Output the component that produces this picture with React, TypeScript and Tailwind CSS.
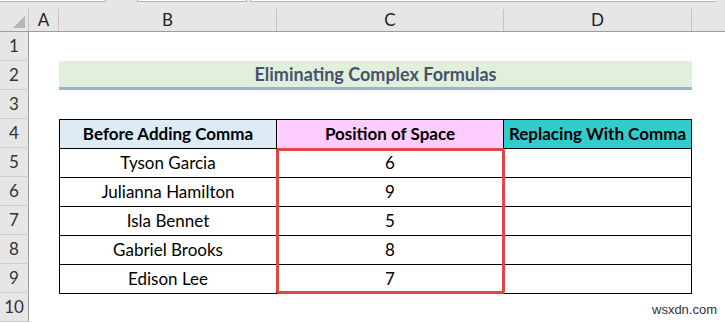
import React from "react";

const names = ["Tyson Garcia", "Julianna Hamilton", "Isla Bennet", "Gabriel Brooks", "Edison Lee"];
const nums = ["6", "9", "5", "8", "7"];

function RowHead({ n }: { n: number }) {
  return (
    <div className="w-[29px] h-[29px] shrink-0 bg-[#e6e6e6] border-r border-r-[#9e9e9e] border-b border-b-[#cfcfcf] flex items-center justify-center text-[17px] text-[#333] box-border">
      {n}
    </div>
  );
}

export default function App() {
  const font = { fontFamily: "Lato, 'Open Sans', sans-serif" };
  return (
    <div className="w-[725px] h-[323px] bg-white overflow-hidden relative" style={font}>
      {/* top strip */}
      <div className="h-[3px] bg-[#e6e6e6] flex">
        <div className="w-[106px] h-[2px] bg-white border-b border-r border-[#b5b5b5]" />
        <div className="w-[31px]" />
        <div className="w-[110px] h-[2px] bg-white border-b border-x border-[#b5b5b5]" />
        <div className="w-[3px]" />
        <div className="w-[466px] h-[2px] bg-white border-b border-l border-[#b5b5b5]" />
      </div>
      {/* column header */}
      <div className="h-[29px] bg-[#e6e6e6] border-b border-[#9e9e9e] flex items-end box-border">
        <div className="w-[29px] h-[22px] border-r border-[#c4c4c4] relative shrink-0">
          <div className="absolute right-[3px] bottom-[3px] w-0 h-0 border-l-[12px] border-l-transparent border-b-[12px] border-b-[#b5b5b5]" />
        </div>
        <div className="w-[30px] h-[22px] border-r border-[#c4c4c4] flex items-center justify-center text-[17px] text-[#222] shrink-0">A</div>
        <div className="w-[218px] h-[22px] border-r border-[#c4c4c4] flex items-center justify-center text-[17px] text-[#222] shrink-0">B</div>
        <div className="w-[227px] h-[22px] border-r border-[#c4c4c4] flex items-center justify-center text-[17px] text-[#222] shrink-0">C</div>
        <div className="w-[188px] h-[22px] border-r border-[#c4c4c4] flex items-center justify-center text-[17px] text-[#222] shrink-0">D</div>
        <div className="flex-1" />
      </div>
      {/* rows */}
      <div className="flex">
        <div className="flex flex-col">
          {[1, 2, 3, 4, 5, 6, 7, 8, 9, 10].map((n) => (
            <RowHead key={n} n={n} />
          ))}
        </div>
        <div className="flex flex-col">
          <div className="h-[29px]" />
          <div className="h-[29px] flex">
            <div className="w-[30px] shrink-0" />
            <div className="w-[633px] h-[29px] bg-[#e2efda] border-b-[3px] border-[#9db0d3] box-border flex items-center justify-center text-[18px] font-bold text-[#44546a] pt-[1px]">
              Eliminating Complex Formulas
            </div>
          </div>
          <div className="h-[29px]" />
          <div className="flex">
            <div className="w-[30px] shrink-0" />
            <div className="relative border-l border-t border-black">
              <div className="flex h-[29px] text-[17px] font-bold text-black">
                <div className="w-[217px] bg-[#ddebf7] border-r border-b border-black flex items-center justify-center box-border">Before Adding Comma</div>
                <div className="w-[227px] bg-[#ffccff] border-r border-b border-black flex items-center justify-center box-border">Position of Space</div>
                <div className="w-[188px] bg-[#33cccc] border-r border-b border-black flex items-center justify-center box-border">Replacing With Comma</div>
              </div>
              {names.map((nm, i) => (
                <div key={nm} className="flex h-[29px] text-[17px] text-black">
                  <div className="w-[217px] border-r border-b border-black flex items-center justify-center box-border">{nm}</div>
                  <div className="w-[227px] border-r border-b border-black flex items-center justify-center box-border">{nums[i]}</div>
                  <div className="w-[188px] border-r border-b border-black box-border" />
                </div>
              ))}
              <div className="absolute left-[216px] top-[28px] w-[229px] h-[146px] border-[3px] border-[#e04848] rounded-[3px] pointer-events-none" />
            </div>
          </div>
        </div>
      </div>
      <div className="absolute left-[652px] top-[300px] text-[13px] text-[#333]" style={{ fontFamily: "'Liberation Sans', Arial, sans-serif" }}>
        wsxdn.com
      </div>
    </div>
  );
}
